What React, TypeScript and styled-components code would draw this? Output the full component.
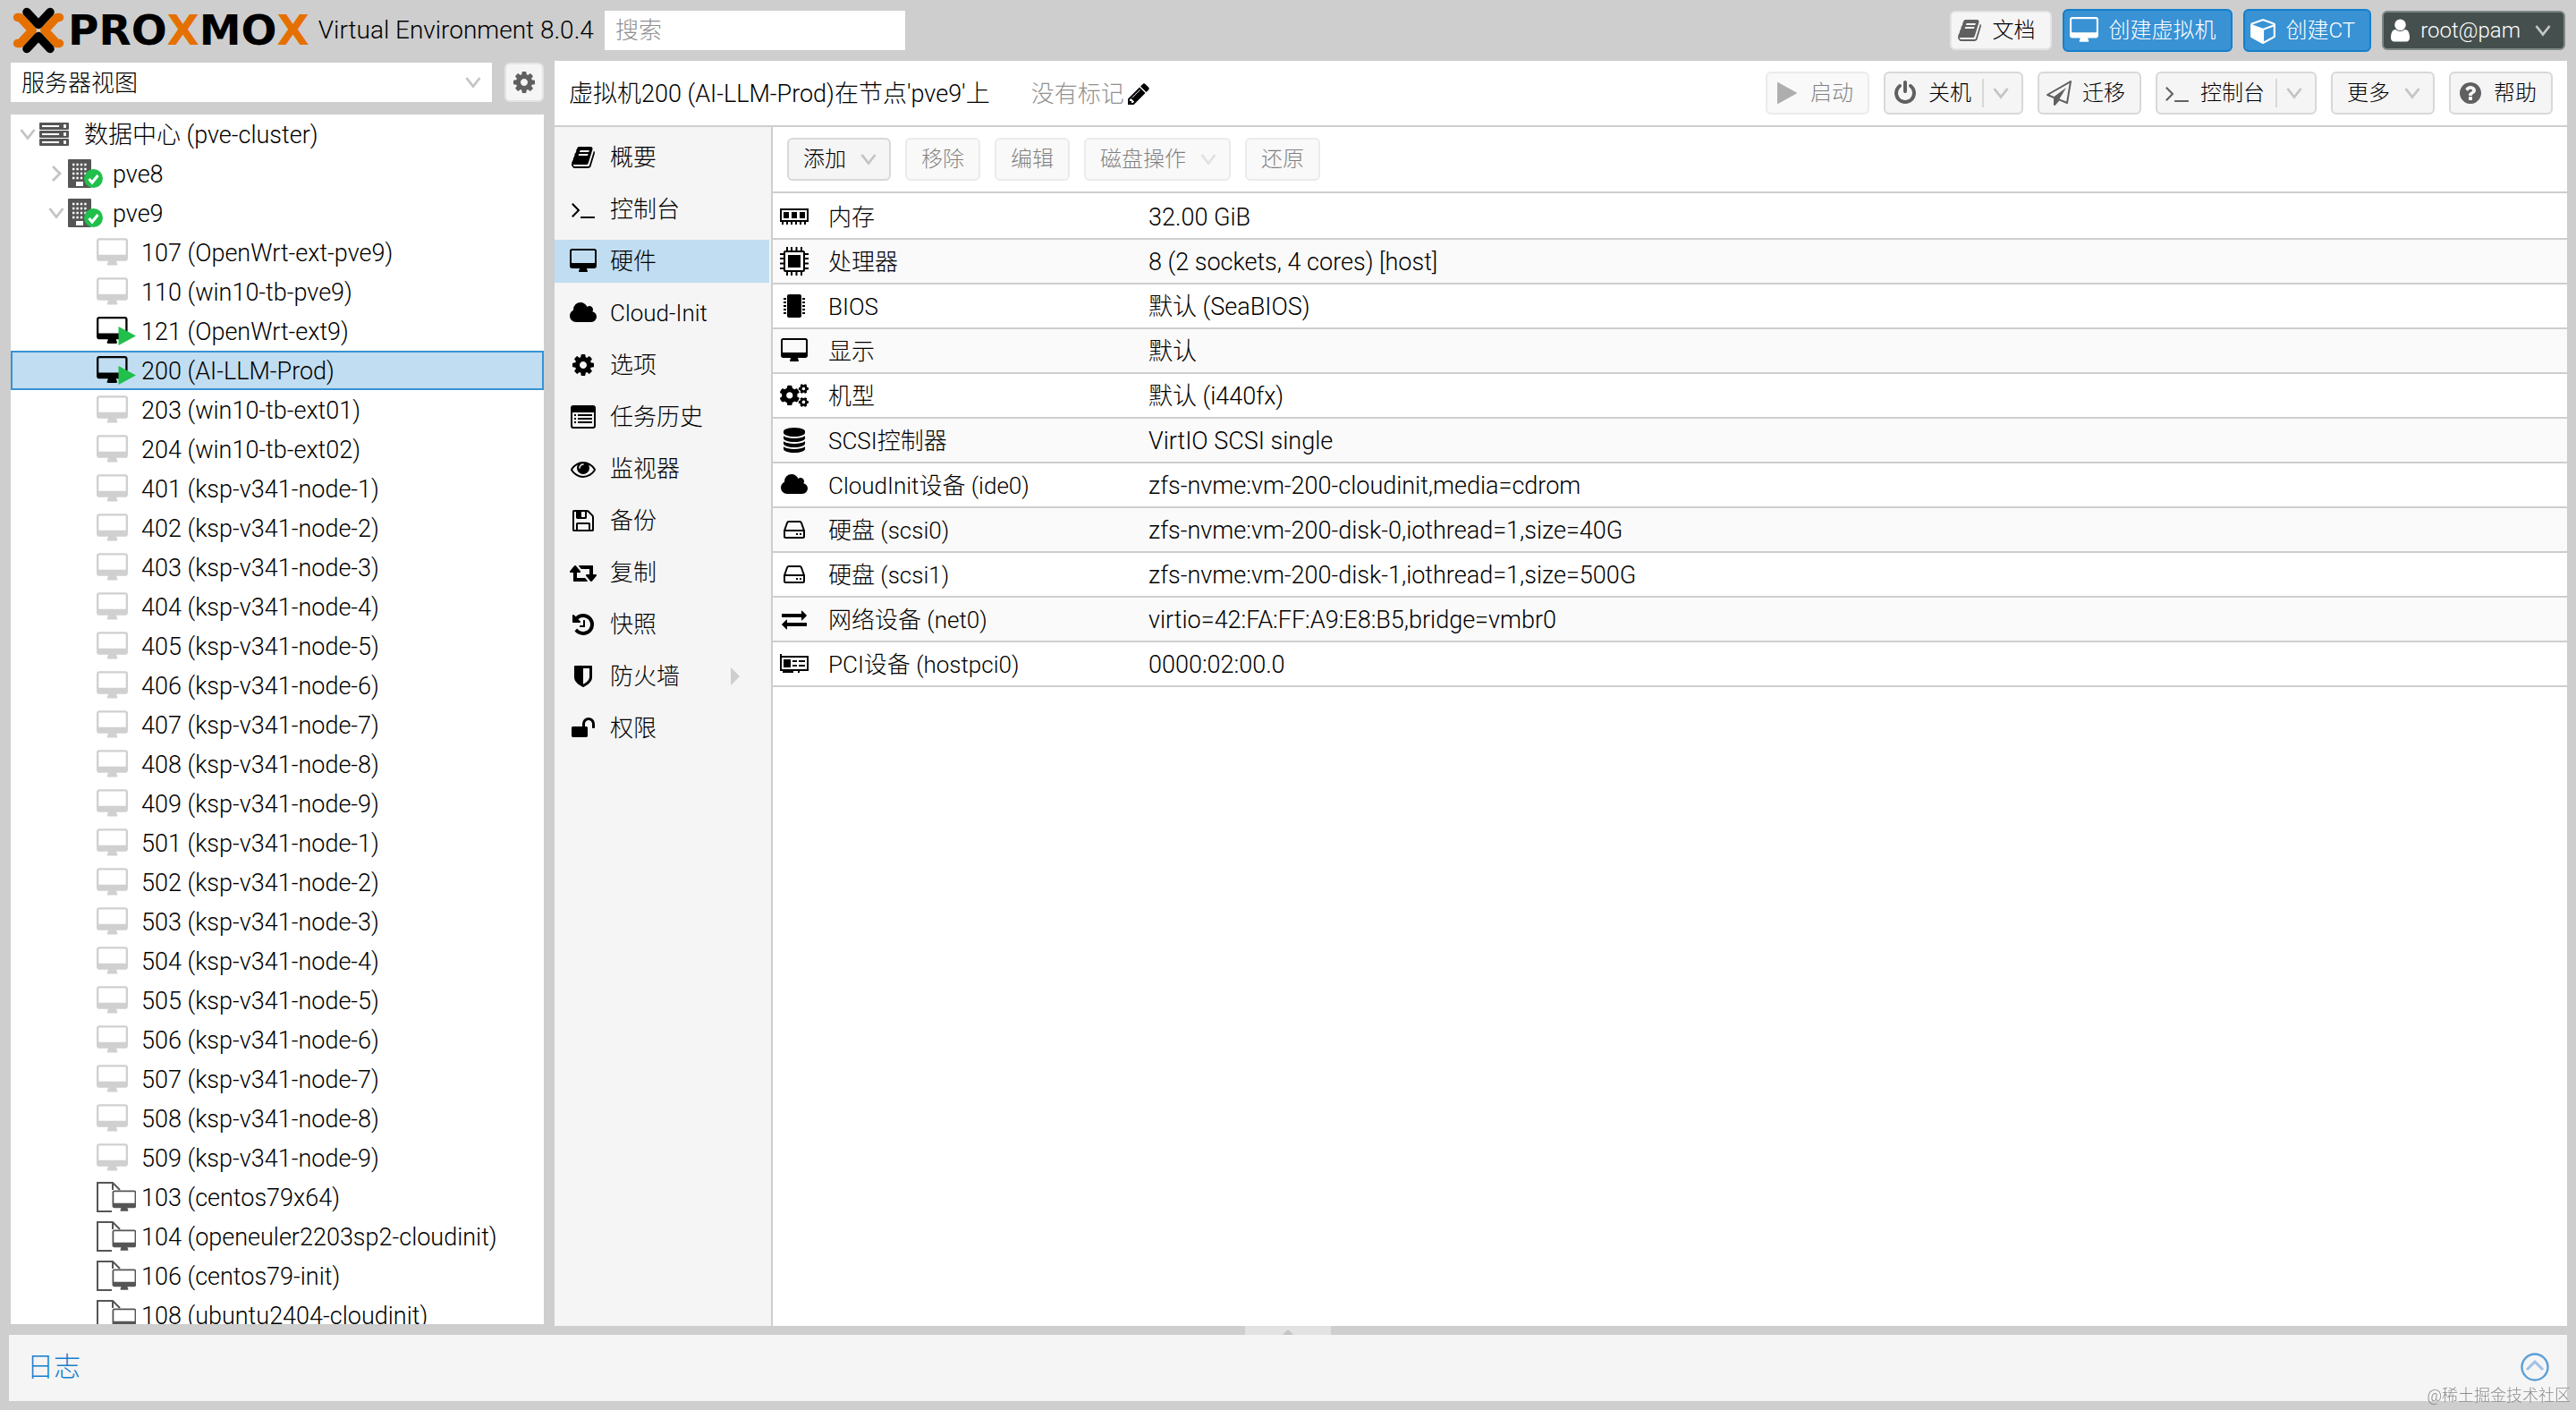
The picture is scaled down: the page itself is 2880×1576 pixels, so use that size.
import React from 'react';
import styled, { createGlobalStyle } from 'styled-components';
import { FaCogs } from 'react-icons/fa';

const FONT = 'Roboto, "Noto Sans CJK SC", sans-serif';

const GlobalStyle = createGlobalStyle`
  *, *::before, *::after { box-sizing: border-box; }
  body { margin: 0; background: #cecece; }
  body, button, input, select {
    font-family: ${FONT};
    font-size: 26px;
    font-weight: 300;
    line-height: 32px;
    color: #000;
  }
  svg { display: block; flex: none; }
`;

/* ---------- icons ---------- */

// Glyph outlines on a 1792-unit em: [left edge, width, path]
const glyphs: Record<string, [number, number, string]> = {
  desktop: [-64, 1920, 'M1728 992v-832q0-13-9.5-22.5t-22.5-9.5h-1600q-13 0-22.5 9.5t-9.5 22.5v832q0 13 9.5 22.5t22.5 9.5h1600q13 0 22.5-9.5t9.5-22.5zm128-832v1088q0 66-47 113t-113 47h-544q0 37 16 77.5t32 71 16 43.5q0 26-19 45t-45 19h-512q-26 0-45-19t-19-45q0-14 16-44t32-70 16-78h-544q-66 0-113-47t-47-113v-1088q0-66 47-113t113-47h1600q66 0 113 47t47 113z'],
  book: [0, 1792, 'M1703 478q40 57 18 129l-275 906q-19 64-76.5 107.5t-122.5 43.5h-923q-77 0-148.5-53.5t-99.5-131.5q-24-67-2-127 0-4 3-27t4-37q1-8-3-21.5t-3-19.5q2-11 8-21t16.5-23.5 16.5-23.5q23-38 45-91.5t30-91.5q3-10 .5-30t-.5-28q3-11 17-28t17-23q21-36 42-92t25-90q1-9-2.5-32t.5-28q4-13 22-30.5t22-22.5q19-26 42.5-84.5t27.5-96.5q1-8-3-25.5t-2-26.5q2-8 9-18t18-23 17-21q8-12 16.5-30.5t15-35 16-36 19.5-32 26.5-23.5 36-11.5 47.5 5.5l-1 3q38-9 51-9h761q74 0 114 56t18 130l-274 906q-36 119-71.5 153.5t-128.5 34.5h-869q-27 0-38 15-11 16-1 43 24 70 144 70h923q29 0 56-15.5t35-41.5l300-987q7-22 5-57 38 15 59 43zm-1064 2q-4 13 2 22.5t20 9.5h608q13 0 25.5-9.5t16.5-22.5l21-64q4-13-2-22.5t-20-9.5h-608q-13 0-25.5 9.5t-16.5 22.5zm-83 256q-4 13 2 22.5t20 9.5h608q13 0 25.5-9.5t16.5-22.5l21-64q4-13-2-22.5t-20-9.5h-608q-13 0-25.5 9.5t-16.5 22.5z'],
  terminal: [0, 1792, 'M649 983l-466 466q-10 10-23 10t-23-10l-50-50q-10-10-10-23t10-23l393-393-393-393q-10-10-10-23t10-23l50-50q10-10 23-10t23 10l466 466q10 10 10 23t-10 23zm1079 457v64q0 14-9 23t-23 9h-960q-14 0-23-9t-9-23v-64q0-14 9-23t23-9h960q14 0 23 9t9 23z'],
  cloud: [64, 1920, 'M1984 1152q0 159-112.5 271.5t-271.5 112.5h-1088q-185 0-316.5-131.5t-131.5-316.5q0-132 71-241.5t187-163.5q-2-28-2-43 0-212 150-362t362-150q158 0 286.5 88t187.5 230q70-62 166-62 106 0 181 75t75 181q0 75-41 138 129 30 213 134.5t84 239.5z'],
  cog: [0, 1792, 'M1152 896q0-106-75-181t-181-75-181 75-75 181 75 181 181 75 181-75 75-181zm512-109v222q0 12-8 23t-20 13l-185 28q-19 54-39 91 35 50 107 138 10 12 10 25t-9 23q-27 37-99 108t-94 71q-12 0-26-9l-138-108q-44 23-91 38-16 136-29 186-7 28-36 28h-222q-14 0-24.5-8.5t-11.5-21.5l-28-184q-49-16-90-37l-141 107q-10 9-25 9-14 0-25-11-126-114-165-168-7-10-7-23 0-12 8-23 15-21 51-66.5t54-70.5q-27-50-41-99l-183-27q-13-2-21-12.5t-8-23.5v-222q0-12 8-23t19-13l186-28q14-46 39-92-40-57-107-138-10-12-10-24 0-10 9-23 26-36 98.5-107.5t94.5-71.5q13 0 26 10l138 107q44-23 91-38 16-136 29-186 7-28 36-28h222q14 0 24.5 8.5t11.5 21.5l28 184q49 16 90 37l142-107q9-9 24-9 13 0 25 10 129 119 165 170 7 8 7 22 0 12-8 23-15 21-51 66.5t-54 70.5q26 50 41 98l183 28q13 2 21 12.5t8 23.5z'],
  eye: [0, 1792, 'M1664 960q-152-236-381-353 61 104 61 225 0 185-131.5 316.5t-316.5 131.5-316.5-131.5-131.5-316.5q0-121 61-225-229 117-381 353 133 205 333.5 326.5t434.5 121.5 434.5-121.5 333.5-326.5zm-720-384q0-20-14-34t-34-14q-125 0-214.5 89.5t-89.5 214.5q0 20 14 34t34 14 34-14 14-34q0-86 61-147t147-61q20 0 34-14t14-34zm848 384q0 34-20 69-140 230-376.5 368.5t-499.5 138.5-499.5-139-376.5-368q-20-35-20-69t20-69q140-229 376.5-368t499.5-139 499.5 139 376.5 368q20 35 20 69z'],
  floppy: [0, 1792, 'M512 1536h768v-384h-768v384zm896 0h128v-896q0-14-10-38.5t-20-34.5l-281-281q-10-10-34-20t-39-10v416q0 40-28 68t-68 28h-576q-40 0-68-28t-28-68v-416h-128v1280h128v-416q0-40 28-68t68-28h832q40 0 68 28t28 68v416zm-384-928v-320q0-13-9.5-22.5t-22.5-9.5h-192q-13 0-22.5 9.5t-9.5 22.5v320q0 13 9.5 22.5t22.5 9.5h192q13 0 22.5-9.5t9.5-22.5zm640 32v928q0 40-28 68t-68 28h-1344q-40 0-68-28t-28-68v-1344q0-40 28-68t68-28h928q40 0 88 20t76 48l280 280q28 28 48 76t20 88z'],
  retweet: [0, 1920, 'M1280 1504q0 13-9.5 22.5t-22.5 9.5h-960q-8 0-13.5-2t-9-7-5.5-8-3-11.5-1-11.5v-600h-192q-26 0-45-19t-19-45q0-24 15-41l320-384q19-22 49-22t49 22l320 384q15 17 15 41 0 26-19 45t-45 19h-192v384h576q16 0 25 11l160 192q7 10 7 21zm640-416q0 24-15 41l-320 384q-20 23-49 23t-49-23l-320-384q-15-17-15-41 0-26 19-45t45-19h192v-384h-576q-16 0-25-12l-160-192q-7-9-7-20 0-13 9.5-22.5t22.5-9.5h960q8 0 13.5 2t9 7 5.5 8 3 11.5 1 11.5v600h192q26 0 45 19t19 45z'],
  history: [0, 1792, 'M1664 896q0 156-61 298t-164 245-245 164-298 61q-172 0-327-72.5t-264-204.5q-7-10-6.5-22.5t8.5-20.5l137-138q10-9 25-9 16 2 23 12 73 95 179 147t225 52q104 0 198.5-40.5t163.5-109.5 109.5-163.5 40.5-198.5-40.5-198.5-109.5-163.5-163.5-109.5-198.5-40.5q-98 0-188 35.5t-160 101.5l137 138q31 30 14 69-17 40-59 40h-448q-26 0-45-19t-19-45v-448q0-42 40-59 39-17 69 14l130 129q107-101 244.5-156.5t284.5-55.5q156 0 298 61t245 164 164 245 61 298zm-640-288v448q0 14-9 23t-23 9h-320q-14 0-23-9t-9-23v-64q0-14 9-23t23-9h224v-352q0-14 9-23t23-9h64q14 0 23 9t9 23z'],
  shield: [0, 1792, 'M1344 960v-640h-448v1137q119-63 213-137 235-184 235-360zm192-768v768q0 86-33.5 170.5t-83 150-118 127.5-126.5 103-121 77.5-89.5 49.5-42.5 20q-12 6-26 6t-26-6q-16-7-42.5-20t-89.5-49.5-121-77.5-126.5-103-118-127.5-83-150-33.5-170.5v-768q0-26 19-45t45-19h1152q26 0 45 19t19 45z'],
  unlock: [0, 1792, 'M1728 576v256q0 26-19 45t-45 19h-64q-26 0-45-19t-19-45v-256q0-106-75-181t-181-75-181 75-75 181v192h96q40 0 68 28t28 68v576q0 40-28 68t-68 28h-960q-40 0-68-28t-28-68v-576q0-40 28-68t68-28h672v-192q0-185 131.5-316.5t316.5-131.5 316.5 131.5 131.5 316.5z'],
  database: [0, 1792, 'M896 768q237 0 443-43t325-127v170q0 69-103 128t-280 93.5-385 34.5-385-34.5-280-93.5-103-128v-170q119 84 325 127t443 43zm0 768q237 0 443-43t325-127v170q0 69-103 128t-280 93.5-385 34.5-385-34.5-280-93.5-103-128v-170q119 84 325 127t443 43zm0-384q237 0 443-43t325-127v170q0 69-103 128t-280 93.5-385 34.5-385-34.5-280-93.5-103-128v-170q119 84 325 127t443 43zm0-1152q208 0 385 34.5t280 93.5 103 128v128q0 69-103 128t-280 93.5-385 34.5-385-34.5-280-93.5-103-128v-128q0-69 103-128t280-93.5 385-34.5z'],
  exchange: [0, 1792, 'M1792 1184v192q0 13-9.5 22.5t-22.5 9.5h-1376v192q0 13-9.5 22.5t-22.5 9.5q-12 0-24-10l-319-320q-9-9-9-22 0-14 9-23l320-320q9-9 23-9 13 0 22.5 9.5t9.5 22.5v192h1376q13 0 22.5 9.5t9.5 22.5zm0-544q0 14-9 23l-320 320q-9 9-23 9-13 0-22.5-9.5t-9.5-22.5v-192h-1376q-13 0-22.5-9.5t-9.5-22.5v-192q0-13 9.5-22.5t22.5-9.5h1376v-192q0-14 9-23t23-9q12 0 24 10l319 319q9 9 9 23z'],
  play: [0, 1792, 'M1576 927l-1328 738q-23 13-39.5 3t-16.5-36v-1472q0-26 16.5-36t39.5 3l1328 738q23 13 23 31t-23 31z'],
  power: [0, 1792, 'M1664 896q0 156-61 298t-164 245-245 164-298 61-298-61-245-164-164-245-61-298q0-182 80.5-343t226.5-270q43-32 95.5-25t83.5 50q32 42 24.5 94.5t-49.5 84.5q-98 74-151.5 181t-53.5 228q0 104 40.5 198.5t109.5 163.5 163.5 109.5 198.5 40.5 198.5-40.5 163.5-109.5 109.5-163.5 40.5-198.5q0-121-53.5-228t-151.5-181q-42-32-49.5-84.5t24.5-94.5q31-43 84-50t95 25q146 109 226.5 270t80.5 343zm-640-768v640q0 52-38 90t-90 38-90-38-38-90v-640q0-52 38-90t90-38 90 38 38 90z'],
  send: [0, 1792, 'M1764 11q33 24 27 64l-256 1536q-5 29-32 45-14 8-31 8-11 0-24-5l-527-215-298 327q-18 21-47 21-14 0-23-4-19-7-30-23.5t-11-36.5v-452l-472-193q-37-14-40-55-3-39 32-59l1664-960q35-21 68 2zm-342 1499l221-1323-1434 827 336 137 863-639-478 797z'],
  help: [0, 1792, 'M1024 1376v-192q0-14-9-23t-23-9h-192q-14 0-23 9t-9 23v192q0 14 9 23t23 9h192q14 0 23-9t9-23zm256-672q0-88-55.5-163t-138.5-116-170-41q-243 0-371 213-15 24 8 42l132 100q7 6 19 6 16 0 25-12 53-68 86-92 34-24 86-24 48 0 85.5 26t37.5 59q0 38-20 61t-68 45q-63 28-115.5 86.5t-52.5 125.5v36q0 14 9 23t23 9h192q14 0 23-9t9-23q0-19 21.5-49.5t54.5-49.5q32-18 49-28.5t46-35 44.5-48 28-60.5 12.5-81zm384 192q0 209-103 385.5t-279.5 279.5-385.5 103-385.5-103-279.5-279.5-103-385.5 103-385.5 279.5-279.5 385.5-103 385.5 103 279.5 279.5 103 385.5z'],
  pencil: [128, 1536, 'M491 1536l91-91-235-235-91 91v107h128v128h107zm523-928q0-22-22-22-10 0-17 7l-542 542q-7 7-7 17 0 22 22 22 10 0 17-7l542-542q7-7 7-17zm-54-192l416 416-832 832h-416v-416zm683 96q0 53-37 90l-166 166-416-416 166-165q36-38 90-38 53 0 91 38l235 234q37 39 37 91z'],
  cube: [0, 1664, 'M896 1629l640-349v-636l-640 233v752zm-64-865l698-254-698-254-698 254 698 254zm832-252v768q0 35-18 65t-49 47l-704 384q-28 16-61 16t-61-16l-704-384q-31-17-49-47t-18-65v-768q0-40 23-73t61-47l704-256q22-8 44-8t44 8l704 256q38 14 61 47t23 73z'],
  user: [256, 1280, 'M1536 1399q0 109-62.5 187t-150.5 78h-854q-88 0-150.5-78t-62.5-187q0-85 8.5-160.5t31.5-152 58.5-131 94-89 134.5-34.5q131 128 313 128t313-128q76 0 134.5 34.5t94 89 58.5 131 31.5 152 8.5 160.5zm-256-887q0 159-112.5 271.5t-271.5 112.5-271.5-112.5-112.5-271.5 112.5-271.5 271.5-112.5 271.5 112.5 112.5 271.5z'],
};

const Glyph = ({ name, size = 28 }: { name: string; size?: number }) => {
  const [left, width, d] = glyphs[name];
  return (
    <svg width={Math.round((width * size) / 1792)} height={size} viewBox={`${left} 0 ${width} 1792`} fill="currentColor" aria-hidden="true">
      <path d={d} />
    </svg>
  );
};

const Chevron = ({ dir = 'down' }: { dir?: 'down' | 'right' }) => (
  <svg width="18" height="18" viewBox="0 0 18 18" fill="none" stroke="#c4c4c4" strokeWidth="2.800" aria-hidden="true">
    <path d={dir === 'down' ? 'M1.5 4L9 13.5L16.5 4' : 'M5 1L13 9L5 17'} />
  </svg>
);

const ListIcon = () => (
  <svg width="28" height="28" viewBox="0 0 28 28" fill="none" aria-hidden="true">
    <rect x="1" y="2" width="26" height="24" rx="2" stroke="currentColor" strokeWidth="2" />
    <path d="M1 3h26v6H1z" fill="currentColor" />
    <path d="M4 12h2M8 12h16M4 16h2M8 16h16M4 20h2M8 20h16" stroke="currentColor" strokeWidth="2" />
  </svg>
);

const HddIcon = () => (
  <svg width="28" height="28" viewBox="0 0 28 28" fill="none" stroke="currentColor" strokeWidth="2" strokeLinejoin="round" aria-hidden="true">
    <path d="M3 15L6 6.500Q6.500 5 8 5H20Q21.500 5 22 6.500L25 15V21.500Q25 23 23.500 23H4.500Q3 23 3 21.500zM3 15H25" />
    <path d="M16 19h2M20 19h2" />
  </svg>
);

const MemoryIcon = () => (
  <svg width="32" height="20" viewBox="0 0 32 20" aria-hidden="true">
    <path d="M0 1h32v15H0zM2 3v11h28V3z" fillRule="evenodd" />
    <path d="M4 5h6v7H4zM13 5h6v7h-6zM22 5h6v7h-6zM2 15h2v4H2zM7 15h2v4H7zM12 15h2v4h-2zM17 15h2v4h-2zM22 15h2v4h-2zM27 15h2v4h-2z" />
  </svg>
);

const CpuIcon = () => (
  <svg width="32" height="32" viewBox="0 0 32 32" aria-hidden="true">
    <rect x="5" y="5" width="22" height="22" rx="1" fill="none" stroke="#000" strokeWidth="2" />
    <path d="M9 9h14v14H9z" />
    <path d="M8 0v5M13 0v5M18.500 0v5M24 0v5M8 27v5M13 27v5M18.500 27v5M24 27v5M0 8h5M0 13h5M0 18.500h5M0 24h5M27 8h5M27 13h5M27 18.500h5M27 24h5" stroke="#000" strokeWidth="2" />
  </svg>
);

const ChipIcon = () => (
  <svg width="24" height="28" viewBox="0 0 24 28" aria-hidden="true">
    <rect x="4" y="1" width="16" height="26" rx="2" />
    <path d="M1.500 5v18M22.500 5v18" stroke="#000" strokeWidth="3" strokeDasharray="2 2" />
  </svg>
);

const PciIcon = () => (
  <svg width="32" height="22" viewBox="0 0 32 22" aria-hidden="true">
    <path d="M0 0h2v2h30v17H0zM2 4v13h28V4z" fillRule="evenodd" />
    <path d="M4 6h8v9H4zM14 7h5v2h-5zM21 7h7v2h-7zM14 12h5v2h-5zM21 12h7v2h-7zM3 19h12v2H3zM20 19h2v2h-2z" />
  </svg>
);

const DatacenterIcon = () => (
  <svg width="33" height="27" viewBox="0 0 33 27" fill="#555" aria-hidden="true">
    {[0, 9, 18].map((y) => (
      <g key={y}>
        <rect y={y} width="33" height="8" rx="1" />
        <rect x="3" y={y + 3} width="19" height="2" fill="#fff" />
        <rect x="27" y={y + 2} width="3" height="4" rx="1" fill="#fff" />
      </g>
    ))}
  </svg>
);

const NodeIcon = () => (
  <svg width="40" height="34" viewBox="0 0 40 34" aria-hidden="true">
    <rect y="1" width="26" height="32" rx="1" fill="#555" />
    <path d="M5 7h16M5 12h16M5 17h16M5 22h12" stroke="#fff" strokeWidth="2.400" strokeDasharray="2.400 2" />
    <rect x="9" y="26" width="8" height="5" fill="#fff" />
    <circle cx="28.500" cy="22.500" r="10.500" fill="#21bf4b" />
    <path d="M23.500 23l3.500 4 6.500-8" stroke="#fff" strokeWidth="3.200" fill="none" />
  </svg>
);

const RunningIcon = () => (
  <svg width="44" height="34" viewBox="0 0 44 34" aria-hidden="true">
    <g transform="translate(0 1) scale(.018)">
      <path transform="translate(64 0)" d={glyphs.desktop[2]} />
    </g>
    <path d="M24.500 12L44 22.500L24.500 33z" fill="#21bf4b" />
  </svg>
);

const TemplateIcon = () => (
  <svg width="44" height="34" viewBox="0 0 44 34" fill="none" stroke="#555" strokeWidth="2" aria-hidden="true">
    <path d="M17 33H1V1H18L26 9M18 1V9" />
    <g transform="translate(17.500 9.500) scale(.014)" fill="#555" stroke="none">
      <path fill="#fff" d="M40 80h1720v1100H40z" />
      <path transform="translate(64 0)" d={glyphs.desktop[2]} />
    </g>
  </svg>
);

const Mark = () => (
  <svg width="58" height="52" viewBox="0 0 58 52" fill="none" strokeWidth="9.500" aria-hidden="true">
    <g stroke="#e57000" strokeLinejoin="round" strokeLinecap="round">
      <path d="M5.500 11.500h3L22 26L8.500 40.500h-3" />
      <path d="M52.500 11.500h-3L36 26L49.500 40.500h3" />
    </g>
    <g stroke="#000" strokeLinecap="round" strokeLinejoin="round">
      <path d="M16 5.500L29 19.500L42 5.500" />
      <path d="M16 46.500L29 32.500L42 46.500" />
    </g>
  </svg>
);

/* ---------- layout ---------- */

const Page = styled.div`
  display: flex;
  flex-direction: column;
  height: 100vh;
  background: #cecece;
`;

const Header = styled.header`
  display: flex;
  align-items: center;
  flex: none;
  height: 68px;
  padding: 0 12px 0 14px;
`;

const Brand = styled.div`
  display: flex;
  align-items: center;
  gap: 4px;
`;

const Wordmark = styled.span`
  font-family: "DejaVu Sans", sans-serif;
  font-weight: 700;
  font-size: 47px;
  line-height: 52px;
  b { color: #e57000; }
`;

const Version = styled.span`
  margin: 0 12px 0 10px;
  font-size: 28px;
  white-space: nowrap;
`;

const Search = styled.input`
  width: 336px;
  height: 44px;
  padding: 0 12px;
  border: 0;
  background: #fff;
  &::placeholder { color: #909090; opacity: 1; }
`;

const HeaderActions = styled.div`
  display: flex;
  align-items: center;
  gap: 12px;
  margin-left: auto;
`;

type Tone = 'plain' | 'primary' | 'dark';
const tones: Record<Tone, string> = {
  plain: 'background: #f5f5f5; border-color: #d8d8d8; color: #000; --icon: #606060;',
  primary: 'background: #3892d4; border-color: #157fcc; color: #fff; --icon: #fff;',
  dark: 'background: #454f4e; border-color: #8d9796; color: #fff; --icon: #fff;',
};

type Fit = 'text' | 'icon' | 'menu' | 'split' | 'top';
const insets: Record<Fit, string> = {
  text: '0 16px',
  icon: '0 16px 0 8px',
  menu: '0 14px 0 16px',
  split: '0 14px 0 8px',
  top: '0 16px 0 6px',
};

const Button = styled.button<{ $tone?: Tone; $fit?: Fit }>`
  display: flex;
  align-items: center;
  justify-content: center;
  gap: 12px;
  height: 48px;
  padding: ${(p) => insets[p.$fit ?? 'text']};
  border: 2px solid;
  border-radius: 6px;
  font-size: 24px;
  white-space: nowrap;
  ${(p) => tones[p.$tone ?? 'plain']}
  svg[fill='currentColor'] { color: var(--icon); }
  &:disabled { opacity: 0.5; }
`;

const ShortButton = styled(Button)`
  height: 44px;
  border-color: ${(p) => (p.$tone === 'dark' ? '#7e8887' : '#e4e4e4')};
`;

const GearButton = styled(ShortButton)`
  width: 44px;
  padding: 0;
`;

const MenuCaret = styled.span`
  margin-left: 4px;
`;

const Split = styled.span`
  display: flex;
  align-items: center;
  height: 32px;
  padding-left: 10px;
  border-left: 2px solid #d8d8d8;
`;

const Main = styled.main`
  display: flex;
  flex: 1;
  min-height: 0;
  gap: 12px;
  padding: 0 10px 0 12px;
`;

const Sidebar = styled.aside`
  display: flex;
  flex-direction: column;
  flex: none;
  width: 596px;
  gap: 14px;
  padding: 2px 0;
`;

const ViewBar = styled.div`
  display: flex;
  gap: 14px;
`;

const ViewField = styled.label`
  display: grid;
  flex: 1;
  align-items: center;
  background: #fff;
  > * { grid-area: 1 / 1; }
  svg { justify-self: end; margin-right: 12px; pointer-events: none; }
`;

const ViewSelect = styled.select`
  appearance: none;
  width: 100%;
  height: 44px;
  padding: 2px 12px 0;
  border: 0;
  background: transparent;
`;

const Tree = styled.ul`
  flex: 1;
  min-height: 0;
  margin: 0;
  padding: 0;
  overflow: hidden;
  background: #fff;
  list-style: none;
`;

const TreeRow = styled.li<{ $depth: number; $selected?: boolean }>`
  display: flex;
  align-items: center;
  height: 44px;
  padding-left: ${(p) => 8 + p.$depth * 32}px;
  border: 2px solid ${(p) => (p.$selected ? '#3892d4' : 'transparent')};
  background: ${(p) => (p.$selected ? '#c1ddf1' : 'transparent')};
  font-size: 27px;
  white-space: nowrap;
`;

const Expander = styled.span`
  width: 22px;
  flex: none;
`;

const TreeIcon = styled.span<{ $off?: boolean }>`
  width: 50px;
  flex: none;
  color: ${(p) => (p.$off ? '#d0d0d0' : '#000')};
`;

const Label = styled.span`
  padding-top: 2px;
`;

const Content = styled.section`
  display: flex;
  flex-direction: column;
  flex: 1;
  min-width: 0;
  background: #fff;
`;

const TitleBar = styled.div`
  display: flex;
  align-items: center;
  flex: none;
  height: 74px;
  padding: 0 16px;
  border-bottom: 2px solid #cecece;
`;

const Title = styled.h1`
  margin: 0 46px 0 0;
  padding-top: 2px;
  font: inherit;
  font-size: 27px;
`;

const Tags = styled.span`
  display: flex;
  align-items: center;
  gap: 4px;
  padding-top: 2px;
  color: #909090;
  svg { color: #000; }
`;

const Actions = styled.div`
  display: flex;
  gap: 16px;
  margin-left: auto;
`;

const Body = styled.div`
  display: flex;
  flex: 1;
  min-height: 0;
`;

const Nav = styled.nav`
  display: flex;
  flex-direction: column;
  flex: none;
  gap: 10px;
  width: 244px;
  padding: 10px 2px 10px 0;
  border-right: 2px solid #cecece;
  background: #f5f5f5;
`;

const NavLink = styled.a<{ $active?: boolean }>`
  display: flex;
  align-items: center;
  height: 48px;
  padding: 0 32px 0 16px;
  background: ${(p) => (p.$active ? '#c1ddf1' : 'transparent')};
  color: #000;
  text-decoration: none;
  > svg:last-child { margin-left: auto; }
`;

const NavIcon = styled.span`
  display: flex;
  justify-content: center;
  width: 32px;
  margin-right: 14px;
`;

const Panel = styled.div`
  flex: 1;
  min-width: 0;
`;

const Toolbar = styled.div`
  display: flex;
  gap: 16px;
  padding: 12px 16px;
  border-bottom: 2px solid #cecece;
`;

const Hardware = styled.table`
  width: 100%;
  border-top: 2px solid #fff;
  border-spacing: 0;
`;

const HwRow = styled.tr`
  &:nth-child(even) { background: #fafafa; }
  th, td {
    height: 50px;
    padding: 0;
    border-bottom: 2px solid #cecece;
    font-weight: 300;
    text-align: left;
  }
  th { width: 420px; }
  td { padding-top: 2px; font-size: 27px; }
`;

const HwName = styled.span`
  display: flex;
  align-items: center;
  gap: 20px;
  padding-left: 6px;
`;

const HwIcon = styled.span`
  display: flex;
  align-items: center;
  justify-content: center;
  width: 36px;
  height: 32px;
`;

const Splitter = styled.div`
  display: flex;
  justify-content: center;
  flex: none;
  height: 10px;
`;

const SplitHandle = styled.button`
  display: flex;
  justify-content: center;
  align-items: flex-end;
  width: 96px;
  height: 10px;
  padding: 0;
  border: 0;
  background: #e2e2e2;
`;

const LogBar = styled.footer`
  display: flex;
  align-items: center;
  justify-content: space-between;
  flex: none;
  height: 74px;
  margin: 0 10px 10px;
  padding: 0 20px 2px;
  background: #f5f5f5;
  color: #157fcc;
  font-size: 30px;
`;

const RoundButton = styled.button`
  display: flex;
  padding: 0;
  border: 0;
  background: none;
`;

const Watermark = styled.span`
  position: fixed;
  right: 6px;
  bottom: 4px;
  color: #8c8c8c;
  font-size: 18px;
  line-height: 24px;
`;

/* ---------- data ---------- */

type Kind = 'dc' | 'node' | 'off' | 'on' | 'template';
type Item = { depth: number; kind: Kind; text: string; open?: boolean; selected?: boolean };

const vm = (kind: Kind, text: string, selected = false): Item => ({ depth: 2, kind, text, selected });
const nodeVms = (base: number) =>
  Array.from({ length: 9 }, (_, i) => vm('off', `${base + i + 1} (ksp-v341-node-${i + 1})`));

const tree: Item[] = [
  { depth: 0, kind: 'dc', text: '数据中心 (pve-cluster)', open: true },
  { depth: 1, kind: 'node', text: 'pve8', open: false },
  { depth: 1, kind: 'node', text: 'pve9', open: true },
  vm('off', '107 (OpenWrt-ext-pve9)'),
  vm('off', '110 (win10-tb-pve9)'),
  vm('on', '121 (OpenWrt-ext9)'),
  vm('on', '200 (AI-LLM-Prod)', true),
  vm('off', '203 (win10-tb-ext01)'),
  vm('off', '204 (win10-tb-ext02)'),
  ...nodeVms(400),
  ...nodeVms(500),
  vm('template', '103 (centos79x64)'),
  vm('template', '104 (openeuler2203sp2-cloudinit)'),
  vm('template', '106 (centos79-init)'),
  vm('template', '108 (ubuntu2404-cloudinit)'),
];

const treeIcons: Record<Kind, React.ReactNode> = {
  dc: <DatacenterIcon />,
  node: <NodeIcon />,
  off: <Glyph name="desktop" size={33} />,
  on: <RunningIcon />,
  template: <TemplateIcon />,
};

const nav: { icon: React.ReactNode; text: string; sub?: boolean }[] = [
  { icon: <Glyph name="book" />, text: '概要' },
  { icon: <Glyph name="terminal" />, text: '控制台' },
  { icon: <Glyph name="desktop" />, text: '硬件' },
  { icon: <Glyph name="cloud" />, text: 'Cloud-Init' },
  { icon: <Glyph name="cog" />, text: '选项' },
  { icon: <ListIcon />, text: '任务历史' },
  { icon: <Glyph name="eye" />, text: '监视器' },
  { icon: <Glyph name="floppy" />, text: '备份' },
  { icon: <Glyph name="retweet" />, text: '复制' },
  { icon: <Glyph name="history" />, text: '快照' },
  { icon: <Glyph name="shield" />, text: '防火墙', sub: true },
  { icon: <Glyph name="unlock" />, text: '权限' },
];

const hardware: [React.ReactNode, string, string][] = [
  [<MemoryIcon />, '内存', '32.00 GiB'],
  [<CpuIcon />, '处理器', '8 (2 sockets, 4 cores) [host]'],
  [<ChipIcon />, 'BIOS', '默认 (SeaBIOS)'],
  [<Glyph name="desktop" />, '显示', '默认'],
  [<FaCogs size={32} />, '机型', '默认 (i440fx)'],
  [<Glyph name="database" />, 'SCSI控制器', 'VirtIO SCSI single'],
  [<Glyph name="cloud" />, 'CloudInit设备 (ide0)', 'zfs-nvme:vm-200-cloudinit,media=cdrom'],
  [<HddIcon />, '硬盘 (scsi0)', 'zfs-nvme:vm-200-disk-0,iothread=1,size=40G'],
  [<HddIcon />, '硬盘 (scsi1)', 'zfs-nvme:vm-200-disk-1,iothread=1,size=500G'],
  [<Glyph name="exchange" />, '网络设备 (net0)', 'virtio=42:FA:FF:A9:E8:B5,bridge=vmbr0'],
  [<PciIcon />, 'PCI设备 (hostpci0)', '0000:02:00.0'],
];

export default function App() {
  return (
    <Page>
      <GlobalStyle />
      <Header>
        <Brand>
          <Mark />
          <Wordmark>PRO<b>X</b>MO<b>X</b></Wordmark>
        </Brand>
        <Version>Virtual Environment 8.0.4</Version>
        <Search type="text" placeholder="搜索" aria-label="搜索" />
        <HeaderActions>
          <ShortButton $fit="top"><Glyph name="book" />文档</ShortButton>
          <Button $tone="primary" $fit="top"><Glyph name="desktop" size={30} />创建虚拟机</Button>
          <Button $tone="primary" $fit="top"><Glyph name="cube" size={30} />创建CT</Button>
          <ShortButton $tone="dark" $fit="split">
            <Glyph name="user" size={30} />root@pam<MenuCaret><Chevron /></MenuCaret>
          </ShortButton>
        </HeaderActions>
      </Header>

      <Main>
        <Sidebar>
          <ViewBar>
            <ViewField>
              <ViewSelect aria-label="视图"><option>服务器视图</option></ViewSelect>
              <Chevron />
            </ViewField>
            <GearButton aria-label="设置"><Glyph name="cog" /></GearButton>
          </ViewBar>
          <Tree>
            {tree.map((item) => (
              <TreeRow key={item.text} $depth={item.depth} $selected={item.selected}>
                <Expander>
                  {item.open !== undefined && <Chevron dir={item.open ? 'down' : 'right'} />}
                </Expander>
                <TreeIcon $off={item.kind === 'off'}>{treeIcons[item.kind]}</TreeIcon>
                <Label>{item.text}</Label>
              </TreeRow>
            ))}
          </Tree>
        </Sidebar>

        <Content>
          <TitleBar>
            <Title>虚拟机200 (AI-LLM-Prod)在节点'pve9'上</Title>
            <Tags>没有标记<Glyph name="pencil" /></Tags>
            <Actions>
              <Button $fit="icon" disabled><Glyph name="play" />启动</Button>
              <Button $fit="split"><Glyph name="power" />关机<Split><Chevron /></Split></Button>
              <Button $fit="icon"><Glyph name="send" />迁移</Button>
              <Button $fit="split"><Glyph name="terminal" />控制台<Split><Chevron /></Split></Button>
              <Button $fit="menu">更多<MenuCaret><Chevron /></MenuCaret></Button>
              <Button $fit="icon"><Glyph name="help" />帮助</Button>
            </Actions>
          </TitleBar>
          <Body>
            <Nav>
              {nav.map((n) => (
                <NavLink key={n.text} href="#" $active={n.text === '硬件'}>
                  <NavIcon>{n.icon}</NavIcon>
                  {n.text}
                  {n.sub && (
                    <svg width="12" height="20" viewBox="0 0 12 20" aria-hidden="true">
                      <path d="M1 0l10 10L1 20z" fill="#cecece" />
                    </svg>
                  )}
                </NavLink>
              ))}
            </Nav>
            <Panel>
              <Toolbar>
                <Button $fit="menu">添加<MenuCaret><Chevron /></MenuCaret></Button>
                <Button disabled>移除</Button>
                <Button disabled>编辑</Button>
                <Button $fit="menu" disabled>磁盘操作<MenuCaret><Chevron /></MenuCaret></Button>
                <Button disabled>还原</Button>
              </Toolbar>
              <Hardware>
                <tbody>
                  {hardware.map(([icon, name, value]) => (
                    <HwRow key={name}>
                      <th scope="row">
                        <HwName><HwIcon>{icon}</HwIcon><Label>{name}</Label></HwName>
                      </th>
                      <td>{value}</td>
                    </HwRow>
                  ))}
                </tbody>
              </Hardware>
            </Panel>
          </Body>
        </Content>
      </Main>

      <Splitter>
        <SplitHandle aria-label="展开日志">
          <svg width="12" height="6" viewBox="0 0 12 6" aria-hidden="true"><path d="M0 6L6 0L12 6z" fill="#c4c4c4" /></svg>
        </SplitHandle>
      </Splitter>
      <LogBar>
        <span>日志</span>
        <RoundButton aria-label="展开">
          <svg width="32" height="32" viewBox="0 0 32 32" fill="none" aria-hidden="true">
            <circle cx="16" cy="16" r="14.500" stroke="#5c9fd6" strokeWidth="2.400" />
            <path d="M7 19l9-9 9 9" stroke="#9fc1e6" strokeWidth="3" />
          </svg>
        </RoundButton>
      </LogBar>
      <Watermark>@稀土掘金技术社区</Watermark>
    </Page>
  );
}
